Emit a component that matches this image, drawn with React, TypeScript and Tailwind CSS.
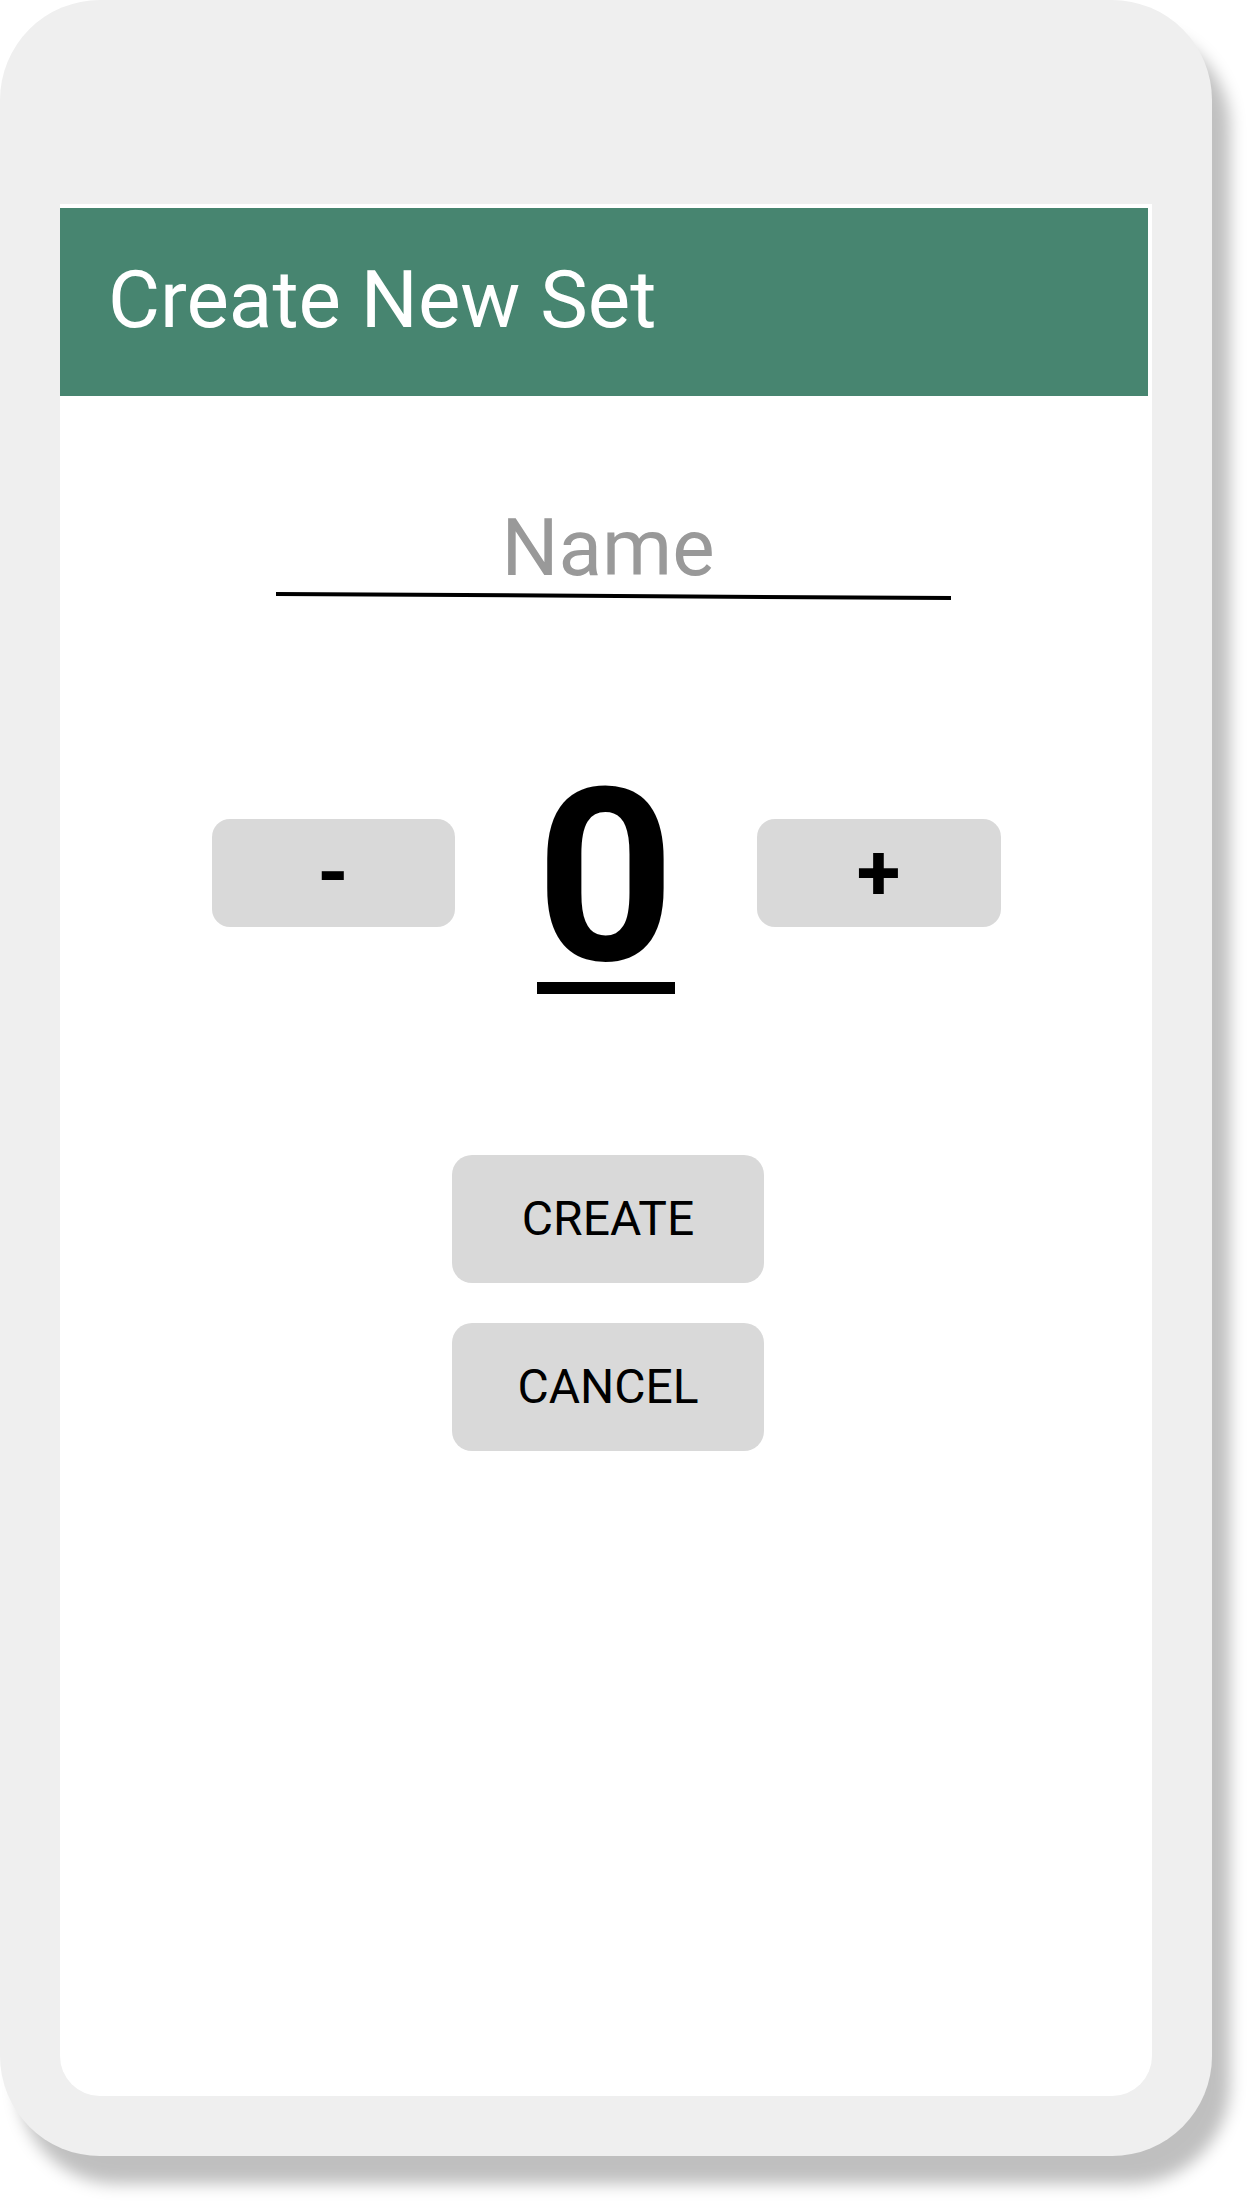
import React from 'react';

const App: React.FC = () => {
  return (
    <div className="w-[1248px] h-[2204px] bg-white font-['Roboto',sans-serif]">
      {/* phone frame */}
      <div className="w-[1212px] h-[2156px] bg-[#efefef] rounded-[100px] shadow-[18px_28px_16px_rgba(0,0,0,0.25)] pt-[204px] px-[60px]">
        {/* screen */}
        <div className="h-[1892px] bg-white rounded-b-[40px] pt-[4px]">
          <div className="mr-[4px] h-[188px] bg-[#478570] pl-[48px] pt-[52px]">
            <h1 className="text-white text-[80px] leading-none">Create New Set</h1>
          </div>

          <div className="flex flex-col items-center">
            {/* name input */}
            <div className="mt-[112px] ml-[14px] w-[675px] flex flex-col">
              <span className="text-[80px] leading-none text-[#999999] text-center pr-[10px]">Name</span>
              <div className="mt-[6px] h-[4px] bg-black rotate-[0.35deg]" />
            </div>

            {/* counter */}
            <div className="mt-[193px] flex items-start gap-[82px]">
              <button className="mt-[28px] w-[243px] h-[108px] rounded-[18px] bg-[#d9d9d9] flex items-center justify-center text-[80px] font-bold leading-none text-black">
                -
              </button>
              <div className="w-[138px] flex flex-col items-center">
                <span className="text-[242px] font-bold leading-[172px] text-black">0</span>
                <div className="mt-[19px] w-[138px] h-[12px] bg-black" />
              </div>
              <button className="mt-[28px] w-[244px] h-[108px] rounded-[18px] bg-[#d9d9d9] flex items-center justify-center text-[80px] font-bold leading-none text-black">
                +
              </button>
            </div>

            {/* actions */}
            <button className="mt-[161px] ml-[4px] w-[312px] h-[128px] rounded-[20px] bg-[#d9d9d9] text-[48px] leading-none text-black">
              CREATE
            </button>
            <button className="mt-[40px] ml-[4px] w-[312px] h-[128px] rounded-[20px] bg-[#d9d9d9] text-[48px] leading-none text-black">
              CANCEL
            </button>
          </div>
        </div>
      </div>
    </div>
  );
};

export default App;
